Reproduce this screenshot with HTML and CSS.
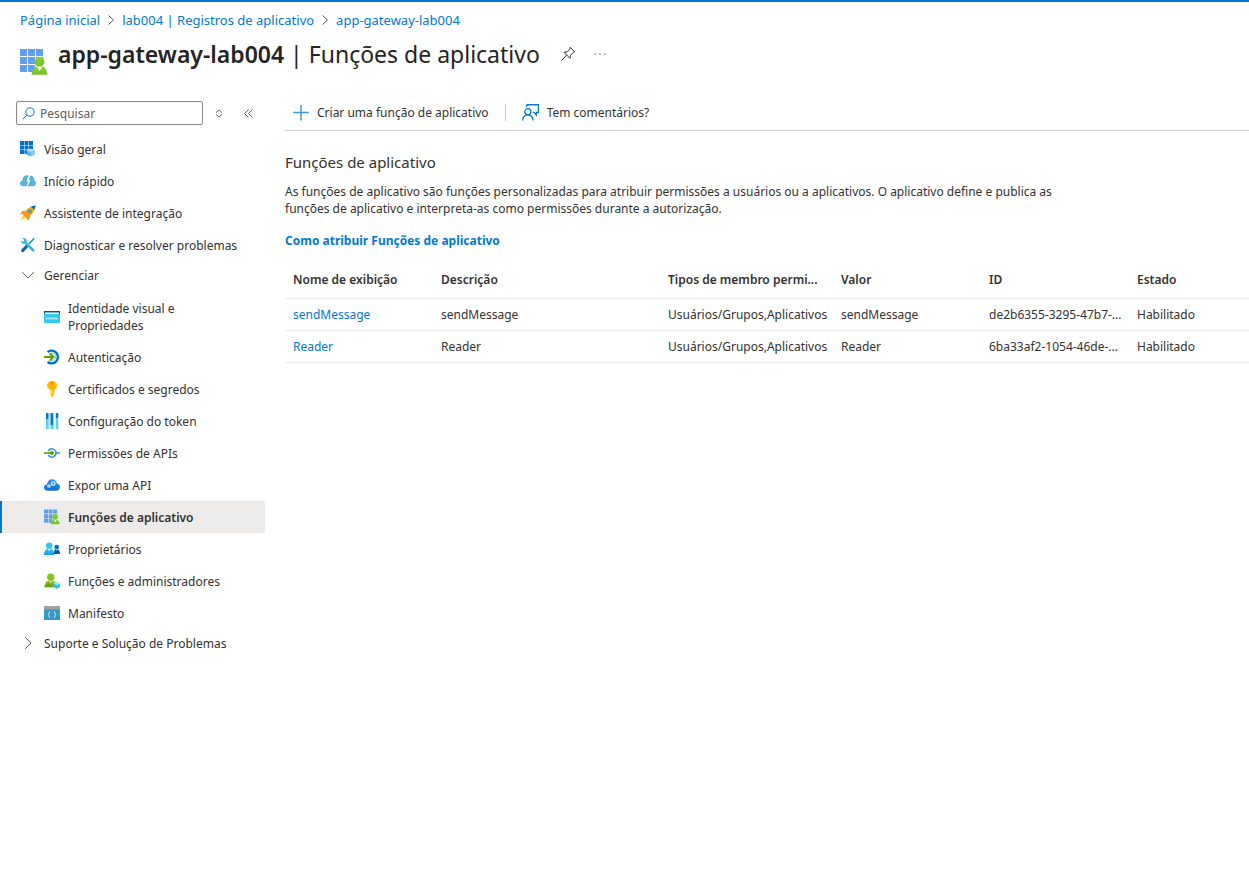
FILE: index.html
```html
<!DOCTYPE html>
<html lang="pt-BR">
<head>
<meta charset="utf-8">
<meta name="viewport" content="width=device-width, initial-scale=1">
<title>app-gateway-lab004 | Funções de aplicativo</title>
<link rel="stylesheet" href="styles.css">
</head>
<body>
<svg class="defs" aria-hidden="true">
  <defs>
    <linearGradient id="g-green" x1="0" y1="0" x2="0" y2="1"><stop offset="0" stop-color="#86d633"/><stop offset="1" stop-color="#76bc2d"/></linearGradient>
    <linearGradient id="g-olive" x1="0" y1="0" x2="0" y2="1"><stop offset="0" stop-color="#86c520"/><stop offset="1" stop-color="#5a9c12"/></linearGradient>
    <linearGradient id="g-cyan" x1="0" y1="0" x2="0" y2="1"><stop offset="0" stop-color="#32c8ef"/><stop offset="1" stop-color="#1b93eb"/></linearGradient>
    <linearGradient id="g-cloud" x1="0" y1="0" x2="0" y2="1"><stop offset="0" stop-color="#2f96ea"/><stop offset="1" stop-color="#0f6fcb"/></linearGradient>
    <linearGradient id="g-rocket" x1="1" y1="0" x2="0" y2="1"><stop offset="0" stop-color="#ffb900"/><stop offset="1" stop-color="#f78d1e"/></linearGradient>
    <symbol id="app-roles" viewBox="0 0 28 28">
      <path fill="#5ea0ef" d="M0 1h7v7H0zM8 1h7v7H8zM16 1h7v7h-7zM0 9h7v7H0zM8 9h7v7H8zM16 9h7v7h-7zM0 17h7v7H0zM8 17h7v7H8z"/>
      <path fill="url(#g-green)" d="M11.500 26.800c.7-3.800 2.200-8 5-8.200h6c2.800.2 4.300 4.400 5 8.200z"/>
      <circle cx="19.500" cy="13.700" r="5" fill="url(#g-green)"/>
      <path fill="#fff" opacity=".85" d="M16.900 18.700h5.400l-2.700 4.500z"/>
    </symbol>
  </defs>
</svg>

<header class="page-header">
  <nav class="breadcrumb" aria-label="Trilha">
    <a href="#">Página inicial</a>
    <svg class="crumb-arrow" viewBox="0 0 8 10" aria-hidden="true"><path d="M1.500 .5l5 4.500-5 4.500"/></svg>
    <a href="#">lab004 | Registros de aplicativo</a>
    <svg class="crumb-arrow" viewBox="0 0 8 10" aria-hidden="true"><path d="M1.500 .5l5 4.500-5 4.500"/></svg>
    <a href="#">app-gateway-lab004</a>
  </nav>
  <div class="title-row">
    <svg class="title-icon" aria-hidden="true"><use href="#app-roles"/></svg>
    <h1 class="title"><strong>app-gateway-lab004</strong> | Funções de aplicativo</h1>
    <button class="icon-button pin" type="button" aria-label="Fixar">
      <svg width="16" height="16" viewBox="0 0 16 16" fill="none" stroke="#323130" aria-hidden="true"><path d="M10.200 1.300l4.500 4.500-1.300.6-2.900 2.900-.5 3-5.900-5.900 3.200-.6 2.500-2.900zM6.700 9.300L1.500 14.500"/></svg>
    </button>
    <button class="icon-button more" type="button" aria-label="Mais">
      <svg width="14" height="4" viewBox="0 0 14 4" fill="#605e5c" aria-hidden="true"><path d="M1.500 1.500h1.300v1.300H1.500zM6.300 1.500h1.300v1.300H6.300zM11.100 1.500h1.300v1.300h-1.300z"/></svg>
    </button>
  </div>
</header>

<div class="layout">
  <aside class="sidebar">
    <div class="search-row">
      <label class="search">
        <svg width="13" height="13" viewBox="0 0 13 13" fill="none" stroke="#0078d4" aria-hidden="true"><circle cx="8" cy="5" r="4.200"/><path d="M5 8L.7 12.300"/></svg>
        <input class="search-input" type="search" placeholder="Pesquisar" aria-label="Pesquisar">
      </label>
      <button class="icon-button sort" type="button" aria-label="Expandir tudo">
        <svg width="8" height="9" viewBox="0 0 8 9" fill="none" stroke="#605e5c" aria-hidden="true"><path d="M1 3.700L4 .9l3 2.800M1 5.300l3 2.800 3-2.800"/></svg>
      </button>
      <button class="icon-button collapse" type="button" aria-label="Recolher menu">
        <svg width="10" height="9" viewBox="0 0 10 9" fill="none" stroke="#605e5c" aria-hidden="true"><path d="M4.500 .5l-4 4 4 4M8.500 .5l-4 4 4 4"/></svg>
      </button>
    </div>
    <nav class="menu" aria-label="Menu do recurso">
      <a class="item" href="#">
        <svg class="icon" viewBox="0 0 16 16" aria-hidden="true"><path fill="#0072c6" d="M0 0h4v4H0zM4.500 0h4v4h-4zM9 0h4v4H9zM0 4.500h4v4H0zM4.500 4.500h4v4h-4zM9 4.500h4v4H9zM0 9h4v4H0zM4.500 9h4v4h-4z"/><path fill="#59b4d9" d="M6.500 9.200l4-1.700 4 1.700v4.500l-4 1.900-4-1.900z"/><path fill="#b8dff0" d="M6.500 9.200l4-1.700 4 1.700-4 1.700z"/><path fill="#88c9e3" d="M10.500 10.900l4-1.700v4.500l-4 1.900z"/></svg>
        <span>Visão geral</span>
      </a>
      <a class="item" href="#">
        <svg class="icon" viewBox="0 0 16 16" aria-hidden="true"><path fill="#59b4d9" d="M3 13.200C1.200 13.200 0 12 0 10.400 0 8.900 1 8 2.200 7.700 2.200 4.800 4 2.500 6.700 2.300c.8 0 1.300.1 2 .4L6.400 8.200h2l-1.800 5z"/><path fill="#59b4d9" d="M7.500 13.200l3-6H8.600l1.700-4.400c2.400-.3 4 1.500 4 4.500 1 .4 1.700 1.400 1.700 2.900 0 1.800-1.100 3-2.800 3z"/></svg>
        <span>Início rápido</span>
      </a>
      <a class="item" href="#">
        <svg class="icon" viewBox="0 0 16 16" aria-hidden="true"><path fill="#f7a01e" d="M5.500 5.500L2.200 6 0 9.300l3.500-.1zM10.300 10.500L10 13.500l-3.200 2.300v-3.500z"/><path fill="#ffca3a" d="M3.500 9.700L.3 15.500l6-3z"/><path fill="url(#g-rocket)" d="M15.300.7C10 1.200 6 4 2.800 9.500l3.700 3.700C12 10 15 6 15.300.7z"/><path fill="#0072c6" d="M15.700.3l-4.800 1.200 3.500 3.600z"/><circle cx="9.800" cy="6.200" r="1.700" fill="#0072c6"/><circle cx="9.800" cy="6.200" r=".9" fill="#8bd3f7"/></svg>
        <span>Assistente de integração</span>
      </a>
      <a class="item" href="#">
        <svg class="icon" viewBox="0 0 16 16" fill="none" aria-hidden="true"><path d="M14.300 1.300L9 7" stroke="#198ab3" stroke-width="1.400"/><path d="M7 9l-4.400 4.600" stroke="#1062a6" stroke-width="3" stroke-linecap="round"/><path d="M5 5l8.300 8.300" stroke="#32b4dc" stroke-width="2.600" stroke-linecap="round"/><path fill="#32b4dc" d="M2.400 1.200l2 2-.9 1.300-1.800-.1L.9 3C.4 5.300 2 7 4.200 6.600L6.700 4.500C7.200 2.300 5 .4 2.400 1.200z"/></svg>
        <span>Diagnosticar e resolver problemas</span>
      </a>
      <button class="item group" type="button" aria-expanded="true">
        <svg class="icon chevron" viewBox="0 0 16 16" aria-hidden="true"><path d="M2.200 5.200L8 11l5.800-5.800"/></svg>
        <span>Gerenciar</span>
      </button>
      <div class="submenu">
        <a class="item two-line" href="#">
          <svg class="icon" viewBox="0 0 16 16" aria-hidden="true"><path fill="#32c8ef" d="M0 2h16v12H0z"/><path fill="#005ba1" d="M0 2h16v3H0z"/><path fill="#fff" d="M1 3.500h14V5H1z"/><path d="M2 8.500l.8 2 1.200-2 .8 2 1.200-2 .8 2 1.200-2 .8 2 1.200-2 .8 2 1.200-2 .8 2 1.200-2" fill="none" stroke="#d9f5fb" stroke-width=".7"/></svg>
          <span>Identidade visual e Propriedades</span>
        </a>
        <a class="item" href="#">
          <svg class="icon" viewBox="0 0 16 16" fill="none" aria-hidden="true"><path d="M3.500 3A6.400 6.400 0 1 1 3.500 13" stroke="#0072c6" stroke-width="2.400"/><path d="M5 5A4 4 0 1 1 5 11" stroke="#59b4d9" stroke-width=".8"/><path d="M0 8h9M6 4.500L9.500 8 6 11.500" stroke="#57a300" stroke-width="2"/></svg>
          <span>Autenticação</span>
        </a>
        <a class="item" href="#">
          <svg class="icon" viewBox="0 0 16 16" aria-hidden="true"><path fill="#ffb900" d="M8 0c3 0 5 2 5 4.500 0 2-1 3.200-2.500 4.200v1.200l-1 1 1 1-1 1.200 1 1L8 16l-1.500-1.500V8.700C4.500 7.700 3 6.500 3 4.500 3 2 5 0 8 0z"/><circle cx="8" cy="2.500" r="1.200" fill="#f07f13"/><path d="M5.500 6.300h5" stroke="#f59b00"/><path d="M7.500 9v5" stroke="#ffe06b"/></svg>
          <span>Certificados e segredos</span>
        </a>
        <a class="item" href="#">
          <svg class="icon" viewBox="0 0 16 16" aria-hidden="true"><path fill="#99a5b0" opacity=".55" d="M4.500 0h1.200v16H4.500zM9 0h1.200v16H9z"/><path fill="#0078d4" d="M2 0h2.500v6H2zM6.500 0H9v12H6.500zM11.800 0h2.500v5h-2.500z"/><path fill="#50d6f5" d="M2 6h2.500v10H2zM6.500 12H9v4H6.500zM11.800 5h2.500v11h-2.500z"/></svg>
          <span>Configuração do token</span>
        </a>
        <a class="item" href="#">
          <svg class="icon" viewBox="0 0 16 16" fill="none" aria-hidden="true"><path d="M4.200 6A4.200 4.200 0 0 1 12 8a4.200 4.200 0 0 1-7.800 2" stroke="#3c9fd0" stroke-width="1.600"/><path d="M12 8h4" stroke="#3c9fd0" stroke-width="1.600"/><path d="M0 8h8" stroke="#57a300" stroke-width="1.600"/><circle cx="7.800" cy="8" r="2.100" fill="#57a300"/></svg>
          <span>Permissões de APIs</span>
        </a>
        <a class="item" href="#">
          <svg class="icon" viewBox="0 0 16 16" aria-hidden="true"><path fill="url(#g-cloud)" d="M3.500 13.700C1.400 13.700 0 12.200 0 10.400c0-1.800 1.200-3 3-3.200C3.300 4.400 5.300 2.300 8 2.300c2.600 0 4.500 1.700 5 4.200 1.800.3 3 1.700 3 3.500 0 2-1.500 3.700-3.700 3.700z"/><g fill="none" stroke="#d8edfb"><circle cx="9.300" cy="6.500" r="1.700" stroke-width="1.300"/><circle cx="5" cy="9" r="1.200" stroke-width="1.200"/></g></svg>
          <span>Expor uma API</span>
        </a>
        <a class="item selected" href="#" aria-current="page">
          <svg class="icon" aria-hidden="true"><use href="#app-roles"/></svg>
          <span>Funções de aplicativo</span>
        </a>
        <a class="item" href="#">
          <svg class="icon" viewBox="0 0 16 16" aria-hidden="true"><path fill="#005ba1" d="M9.500 13c.3-2.800 1-4.500 2.200-4.700h2c1.300.2 2 2 2.300 4.700z"/><circle cx="12.700" cy="6" r="2.300" fill="#0072c6"/><path fill="url(#g-cyan)" d="M0 14c.3-3.600 1.300-5.700 3-6h4.300c1.700.3 2.700 2.400 3 6z"/><circle cx="5.200" cy="4.800" r="3.300" fill="#32c8ef"/><path fill="#fff" d="M3.800 8h2.800l-1.400 2.300zM11.900 8.300h1.700l-.8 1.500z"/></svg>
          <span>Proprietários</span>
        </a>
        <a class="item" href="#">
          <svg class="icon" viewBox="0 0 16 16" aria-hidden="true"><path fill="url(#g-olive)" d="M.3 14.200C.8 10.700 2 8.300 4 8h5.600c1.800.3 3 2.700 3.500 6.200z"/><circle cx="6.800" cy="4.200" r="3.700" fill="#86c520"/><path fill="#d4ef9c" d="M5.200 8h3l-1.500 2.500z"/><path fill="#32bedd" d="M9.500 10.500l3.300-1.700 3.200 1.700v3.600l-3.200 1.800-3.300-1.800z"/><path fill="#9cebff" d="M9.500 10.500l3.300-1.700 3.200 1.700-3.200 1.700z"/></svg>
          <span>Funções e administradores</span>
        </a>
        <a class="item" href="#">
          <svg class="icon" viewBox="0 0 16 16" fill="none" aria-hidden="true"><path fill="#3999c6" d="M0 1h16v14H0z"/><path fill="#a0a1a2" d="M0 1h16v3.500H0z"/><path d="M6 6.500c-1.400 0-.5 2.500-1.500 3 1 .5.100 3 1.500 3M10 6.500c1.400 0 .5 2.500 1.500 3-1 .5-.1 3-1.500 3" stroke="#d5edf8"/></svg>
          <span>Manifesto</span>
        </a>
      </div>
      <button class="item group" type="button" aria-expanded="false">
        <svg class="icon chevron" viewBox="0 0 16 16" aria-hidden="true"><path d="M5.200 2.200L11 8l-5.800 5.800"/></svg>
        <span>Suporte e Solução de Problemas</span>
      </button>
    </nav>
  </aside>

  <main class="content">
    <div class="toolbar">
      <button class="command" type="button">
        <svg width="16" height="16" viewBox="0 0 16 16" aria-hidden="true"><path d="M8 0v15.500M.2 7.500h15.600" stroke="#3a96de" stroke-width="1.400"/></svg>
        <span>Criar uma função de aplicativo</span>
      </button>
      <button class="command feedback" type="button">
        <svg width="17" height="17" viewBox="0 0 16 16" fill="none" stroke="#0078d4" stroke-width="1.200" aria-hidden="true"><circle cx="5.500" cy="7.300" r="2.900"/><path d="M.6 15.600c.2-3.300 2-5.400 4.900-5.400s4.700 2.100 4.900 5.400M4.500 2.800V.7h11v7.200h-2v2.500l-2.300-2.500h-1"/></svg>
        <span>Tem comentários?</span>
      </button>
    </div>
    <h2 class="heading">Funções de aplicativo</h2>
    <p class="intro">As funções de aplicativo são funções personalizadas para atribuir permissões a usuários ou a aplicativos. O aplicativo define e publica as funções de aplicativo e interpreta-as como permissões durante a autorização.</p>
    <a class="help-link" href="#">Como atribuir Funções de aplicativo</a>
    <table class="roles">
      <colgroup><col class="c-std"><col class="c-desc"><col class="c-types"><col class="c-std"><col class="c-std"><col></colgroup>
      <thead>
        <tr><th scope="col">Nome de exibição</th><th scope="col">Descrição</th><th scope="col">Tipos de membro permi...</th><th scope="col">Valor</th><th scope="col">ID</th><th scope="col">Estado</th></tr>
      </thead>
      <tbody>
        <tr><td><a href="#">sendMessage</a></td><td>sendMessage</td><td>Usuários/Grupos,Aplicativos</td><td>sendMessage</td><td>de2b6355-3295-47b7-...</td><td>Habilitado</td></tr>
        <tr><td><a href="#">Reader</a></td><td>Reader</td><td>Usuários/Grupos,Aplicativos</td><td>Reader</td><td>6ba33af2-1054-46de-...</td><td>Habilitado</td></tr>
      </tbody>
    </table>
  </main>
</div>
</body>
</html>
```
FILE: styles.css
```css
* { box-sizing: border-box; }

body {
  margin: 0;
  border-top: 2px solid #0078d4;
  background: #fff;
  color: #323130;
  font: 12px/17px "Segoe UI", "Noto Sans", "Open Sans", sans-serif;
}

a { color: #0078d4; text-decoration: none; }

button {
  padding: 0;
  border: 0;
  background: none;
  color: inherit;
  font: inherit;
  text-align: left;
  cursor: pointer;
}

svg { flex: none; }
.defs { position: absolute; width: 0; height: 0; }

.page-header { padding: 8px 20px 0; }

.breadcrumb { display: flex; align-items: center; gap: 7px; height: 20px; font-size: 13px; white-space: nowrap; }
.crumb-arrow { width: 8px; height: 10px; fill: none; stroke: #605e5c; }

.title-row { display: flex; align-items: center; height: 48px; }
.title-icon { width: 28px; height: 28px; margin: 16px 10px 0 0; }
.title { margin: 0; font-size: 23px; line-height: 32px; font-weight: 400; white-space: nowrap; color: #252423; }
.title strong { font-weight: 600; }
.icon-button { display: flex; align-items: center; justify-content: center; }
.pin { margin-left: 20px; }
.more { margin-left: 17px; }

.layout { display: flex; margin-top: 17px; }

.sidebar { flex: none; width: 265px; }
.search-row { display: flex; align-items: center; height: 36px; padding-left: 16px; }
.search {
  display: flex;
  align-items: center;
  gap: 5px;
  width: 187px;
  height: 24px;
  padding: 0 5px;
  border: 1px solid #8a8886;
  border-radius: 2px;
}
.search-input { width: 100%; min-width: 0; padding: 0; border: 0; outline: 0; background: none; font: inherit; color: inherit; }
.search-input::placeholder { color: #605e5c; opacity: 1; }
.sort { margin-left: 12px; }
.collapse { margin-left: 21px; }

.menu, .submenu { display: flex; flex-direction: column; }
.menu { padding-top: 2px; }
.item { display: flex; align-items: center; gap: 8px; min-height: 32px; padding: 0 20px; color: #323130; white-space: nowrap; }
.icon { width: 16px; height: 16px; }
.chevron { fill: none; stroke: #605e5c; }
.group { min-height: 28px; }
.submenu { padding-top: 4px; }
.submenu .item { padding-left: 44px; }
.submenu .two-line { min-height: 48px; padding-right: 76px; white-space: normal; }
.submenu .selected { padding-left: 42px; border-left: 2px solid #0078d4; background: #edebe9; font-weight: 600; }

.content { flex: 1; min-width: 0; padding-left: 20px; }
.toolbar { display: flex; align-items: center; height: 36px; padding-left: 8px; border-bottom: 1px solid #d2d0ce; }
.command { display: flex; align-items: center; gap: 8px; white-space: nowrap; }
.feedback { margin-left: 16px; padding-left: 16px; border-left: 1px solid #c8c6c4; }

.heading { margin: 20px 0 0; font-size: 15px; line-height: 22px; font-weight: 400; }
.intro { max-width: 800px; margin: 10px 0 0; }
.help-link { display: inline-block; margin-top: 15px; font-weight: 700; }

.roles { width: 100%; margin-top: 13px; border-collapse: collapse; table-layout: fixed; }
.roles th, .roles td {
  height: 32px;
  padding: 0 0 0 8px;
  border-bottom: 1px solid #edebe9;
  text-align: left;
  white-space: nowrap;
}
.roles th { height: 36px; font-weight: 600; }
.c-std { width: 148px; }
.c-desc { width: 227px; }
.c-types { width: 173px; }
```
